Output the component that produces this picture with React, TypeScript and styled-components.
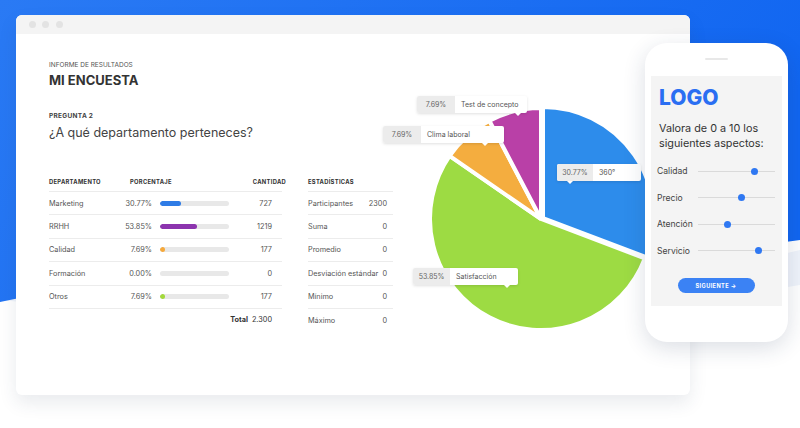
import React from 'react';
import styled, { createGlobalStyle } from 'styled-components';

const GlobalStyle = createGlobalStyle`
  html, body { margin:0; padding:0; }
  body { font-family: Inter, "Open Sans", sans-serif; color:#333; }
`;

const Stage = styled.div`
  position:relative;
  width:800px;
  height:428px;
  overflow:hidden;
  background:#ffffff;
`;
const Backdrop = styled.svg`
  position:absolute;
  left:0;
  top:0;
`;
const Window = styled.div`
  position:relative;
  margin:15px 0 0 16px;
  width:674px;
  height:380px;
  background:#ffffff;
  border-radius:6px;
  box-shadow:0 8px 18px rgba(40,60,90,0.10);
`;
const TitleBar = styled.div`
  height:19px;
  background:#f4f4f4;
  border-radius:6px 6px 0 0;
  display:flex;
  align-items:center;
  gap:6.5px;
  padding-left:12.5px;
`;
const Dot = styled.span`
  width:7px;
  height:7px;
  border-radius:50%;
  background:#e3e3e3;
`;
const Body = styled.div`
  display:flex;
`;
const LeftCol = styled.div`
  padding:26px 0 0 33px;
  width:344px;
`;
const Kicker = styled.div`
  font-size:6.5px;
  line-height:10px;
  color:#555;
  text-transform:uppercase;
`;
const Title = styled.div`
  margin-top:1px;
  font-size:13px;
  line-height:18px;
  font-weight:700;
  color:#333;
`;
const QLabel = styled.div`
  margin-top:22px;
  font-size:6.5px;
  line-height:10px;
  font-weight:700;
  letter-spacing:0.3px;
  color:#444;
`;
const Question = styled.div`
  margin-top:3px;
  font-size:12.5px;
  line-height:18px;
  color:#444;
`;
const Tables = styled.div`
  margin-top:29px;
  display:flex;
  gap:26px;
`;
const DeptTable = styled.div`
  width:233px;
`;
const StatTable = styled.div`
  width:85px;
`;
const HeadRow = styled.div<{ $cols: string }>`
  display:grid;
  grid-template-columns:${p => p.$cols};
  align-items:center;
  height:20px;
  border-bottom:1px solid #ececec;
  font-size:5.8px;
  font-weight:700;
  letter-spacing:0.3px;
  color:#333;
`;
const HeadRight = styled.span`
  text-align:right;
  margin-right:-4px;
`;
const Row = styled.div`
  display:grid;
  grid-template-columns:64px 39px 77px 43px;
  align-items:center;
  height:22.4px;
  border-bottom:1px solid #ececec;
  font-size:7.3px;
  color:#555;
`;
const Num = styled.span`
  text-align:right;
`;
const Track = styled.div`
  margin-left:8px;
  height:5px;
  border-radius:3px;
  background:#e8e8e8;
  overflow:hidden;
`;
const Fill = styled.div<{ $color: string }>`
  height:100%;
  border-radius:3px;
  background:${p => p.$color};
`;
const TotalRow = styled.div`
  display:flex;
  justify-content:flex-end;
  align-items:center;
  gap:4px;
  height:22px;
  padding-right:10px;
  font-size:7.3px;
  color:#333;
  b { font-weight:700; }
`;
const StatRow = styled.div<{ $last?: boolean }>`
  display:flex;
  justify-content:space-between;
  align-items:center;
  height:22.4px;
  padding-right:6px;
  border-bottom:${p => (p.$last ? 'none' : '1px solid #ececec')};
  font-size:7.3px;
  color:#555;
`;
const ChartArea = styled.div`
  position:relative;
  margin:56px 0 0 7px;
  width:280px;
  height:260px;
`;
const Tip = styled.div<{ $x: number; $y: number; $w: number; $tip: number }>`
  position:absolute;
  left:${p => p.$x}px;
  top:${p => p.$y}px;
  width:${p => p.$w}px;
  height:17px;
  display:flex;
  align-items:center;
  background:#ffffff;
  border-radius:2px;
  box-shadow:0 1px 3px rgba(0,0,0,0.12);
  font-size:7px;
  color:#555;
  &::after {
    content:'';
    position:absolute;
    left:${p => p.$tip - 3}px;
    bottom:-3px;
    border-left:3px solid transparent;
    border-right:3px solid transparent;
    border-top:3px solid #ffffff;
  }
`;
const TipPct = styled.span<{ $w: number }>`
  width:${p => p.$w}px;
  height:100%;
  display:flex;
  align-items:center;
  justify-content:center;
  background:#ececec;
  color:#666;
  border-radius:2px 0 0 2px;
`;
const TipLabel = styled.span`
  padding-left:6px;
`;
const Phone = styled.div`
  position:absolute;
  left:645px;
  top:43px;
  width:143px;
  height:299px;
  box-sizing:border-box;
  padding:0 6px;
  border-radius:22px;
  background:#ffffff;
  box-shadow:0 6px 22px rgba(30,50,90,0.16);
  display:flex;
  flex-direction:column;
`;
const Speaker = styled.div`
  margin:15px auto 0;
  width:23px;
  height:2px;
  border-radius:1px;
  background:#e8e8e8;
`;
const Screen = styled.div`
  margin-top:16px;
  height:230px;
  box-sizing:border-box;
  padding:12px 7px 0 6px;
  background:#f4f4f4;
  display:flex;
  flex-direction:column;
`;
const Logo = styled.div`
  padding-left:2px;
  font-size:21px;
  line-height:20px;
  font-weight:800;
  color:#2a6ef2;
`;
const Prompt = styled.div`
  margin-top:13px;
  padding-left:2px;
  font-size:10.8px;
  line-height:15px;
  color:#333;
`;
const Sliders = styled.div`
  margin-top:7px;
  display:flex;
  flex-direction:column;
`;
const SliderRow = styled.div`
  display:grid;
  grid-template-columns:41px 1fr;
  align-items:center;
  height:26.5px;
  font-size:8.6px;
  color:#444;
`;
const SliderTrack = styled.div`
  position:relative;
  height:1px;
  background:#dadada;
`;
const Thumb = styled.span`
  position:absolute;
  top:-3px;
  width:7px;
  height:7px;
  margin-left:-3.5px;
  border-radius:50%;
  background:#2f78f2;
`;
const NextButton = styled.div`
  margin:14px auto 0;
  width:77px;
  height:15px;
  border-radius:8px;
  background:#3b82f4;
  color:#ffffff;
  display:flex;
  align-items:center;
  justify-content:center;
  font-size:5.6px;
  font-weight:700;
  letter-spacing:0.4px;
`;

const depts = [
  { name: 'Marketing', pct: '30.77%', val: 30.77, count: '727', color: '#2f7ce6' },
  { name: 'RRHH', pct: '53.85%', val: 53.85, count: '1219', color: '#8c34ae' },
  { name: 'Calidad', pct: '7.69%', val: 7.69, count: '177', color: '#f6a93b' },
  { name: 'Formación', pct: '0.00%', val: 0, count: '0', color: '#cccccc' },
  { name: 'Otros', pct: '7.69%', val: 7.69, count: '177', color: '#a3d93b' },
];

const stats = [
  ['Participantes', '2300'],
  ['Suma', '0'],
  ['Promedio', '0'],
  ['Desviación estándar', '0'],
  ['Mínimo', '0'],
  ['Máximo', '0'],
];

const sliders = [
  { label: 'Calidad', pos: 74 },
  { label: 'Precio', pos: 57 },
  { label: 'Atención', pos: 38 },
  { label: 'Servicio', pos: 79 },
];

const CX = 141;
const CY = 129;
const R = 111;

const pt = (deg: number, r: number) => {
  const a = (deg * Math.PI) / 180;
  return [CX + r * Math.sin(a), CY - r * Math.cos(a)];
};

const slice = (from: number, to: number) => {
  const [x1, y1] = pt(from, R);
  const [x2, y2] = pt(to, R);
  const large = to - from > 180 ? 1 : 0;
  return `M${CX},${CY} L${x1},${y1} A${R},${R} 0 ${large} 1 ${x2},${y2} Z`;
};

const Pie = () => (
  <svg width="280" height="260" viewBox="0 0 280 260">
    <g stroke="#ffffff" strokeWidth="4" strokeLinejoin="miter">
      <path d={slice(110.77, 304.62)} fill="#9ddb43" />
      <path d={slice(304.62, 332.31)} fill="#f4ad3f" />
      <path d={slice(332.31, 360)} fill="#b940a7" />
      <path d={slice(0, 110.77)} fill="#2d8ceb" transform="translate(2,-1)" />
    </g>
  </svg>
);

export default function App() {
  return (
    <Stage>
      <GlobalStyle />
      <Backdrop width="800" height="428" viewBox="0 0 800 428">
        <defs>
          <linearGradient id="bg" x1="0" y1="0" x2="1" y2="0.3">
            <stop offset="0" stopColor="#2a7af4" />
            <stop offset="1" stopColor="#1166f1" />
          </linearGradient>
        </defs>
        <path d="M0,250 C200,300 600,300 800,250 L800,285 C600,320 200,320 0,300 Z" fill="#f0f4fb" />
        <path d="M0,0 H800 V240 C600,270 250,250 0,302 Z" fill="url(#bg)" />
      </Backdrop>
      <Window>
        <TitleBar>
          <Dot />
          <Dot />
          <Dot />
        </TitleBar>
        <Body>
          <LeftCol>
            <Kicker>Informe de resultados</Kicker>
            <Title>MI ENCUESTA</Title>
            <QLabel>PREGUNTA 2</QLabel>
            <Question>¿A qué departamento perteneces?</Question>
            <Tables>
              <DeptTable>
                <HeadRow $cols="81px 1fr auto">
                  <span>DEPARTAMENTO</span>
                  <span>PORCENTAJE</span>
                  <HeadRight>CANTIDAD</HeadRight>
                </HeadRow>
                {depts.map(d => (
                  <Row key={d.name}>
                    <span>{d.name}</span>
                    <Num>{d.pct}</Num>
                    <Track>
                      <Fill $color={d.color} style={{ width: d.val > 0 ? `max(${d.val}%, 4px)` : 0 }} />
                    </Track>
                    <Num>{d.count}</Num>
                  </Row>
                ))}
                <TotalRow>
                  <b>Total</b>
                  <span>2.300</span>
                </TotalRow>
              </DeptTable>
              <StatTable>
                <HeadRow $cols="1fr">
                  <span>ESTADÍSTICAS</span>
                </HeadRow>
                {stats.map(([k, v], i) => (
                  <StatRow key={k} $last={i === stats.length - 1}>
                    <span>{k}</span>
                    <span>{v}</span>
                  </StatRow>
                ))}
              </StatTable>
            </Tables>
          </LeftCol>
          <ChartArea>
            <Pie />
            <Tip $x={17} $y={6} $w={110} $tip={101}>
              <TipPct $w={38}>7.69%</TipPct>
              <TipLabel>Test de concepto</TipLabel>
            </Tip>
            <Tip $x={-17} $y={36} $w={121} $tip={102}>
              <TipPct $w={38}>7.69%</TipPct>
              <TipLabel>Clima laboral</TipLabel>
            </Tip>
            <Tip $x={157} $y={74} $w={84} $tip={13}>
              <TipPct $w={36}>30.77%</TipPct>
              <TipLabel>360°</TipLabel>
            </Tip>
            <Tip $x={13} $y={178} $w={105} $tip={94}>
              <TipPct $w={37}>53.85%</TipPct>
              <TipLabel>Satisfacción</TipLabel>
            </Tip>
          </ChartArea>
        </Body>
      </Window>
      <Phone>
        <Speaker />
        <Screen>
          <Logo>LOGO</Logo>
          <Prompt>
            Valora de 0 a 10 los
            <br />
            siguientes aspectos:
          </Prompt>
          <Sliders>
            {sliders.map(s => (
              <SliderRow key={s.label}>
                <span>{s.label}</span>
                <SliderTrack>
                  <Thumb style={{ left: `${s.pos}%` }} />
                </SliderTrack>
              </SliderRow>
            ))}
          </Sliders>
          <NextButton>SIGUIENTE →</NextButton>
        </Screen>
      </Phone>
    </Stage>
  );
}
